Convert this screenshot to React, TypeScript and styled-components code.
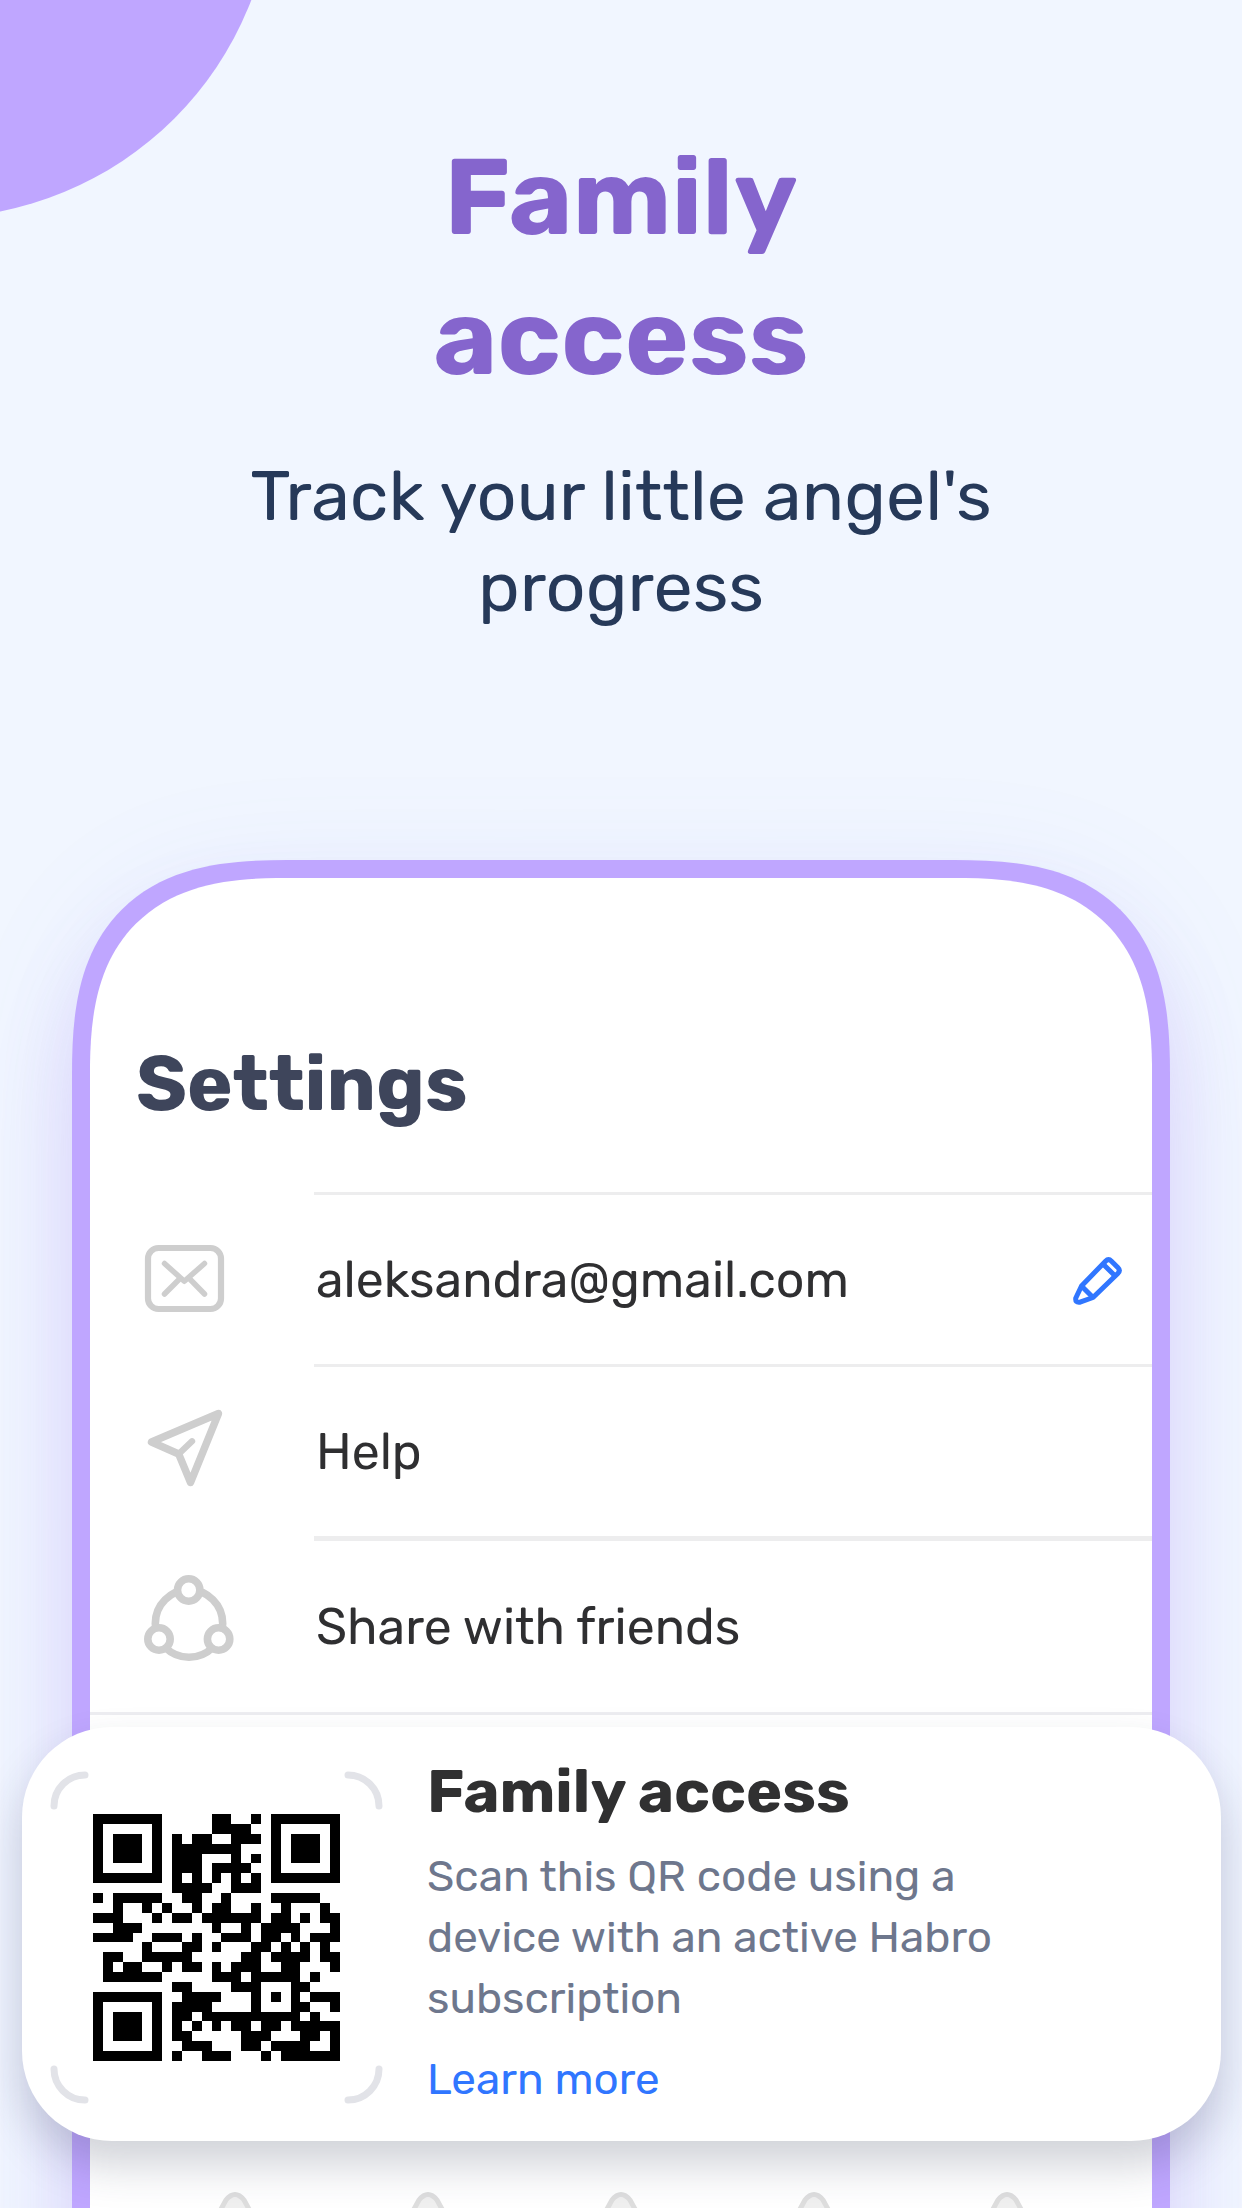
import React from "react";
import styled, { createGlobalStyle } from "styled-components";

const GlobalStyle = createGlobalStyle`
  *, *::before, *::after { box-sizing: border-box; }
  html, body { margin: 0; padding: 0; }
  h1, h2, h3, p, ul { margin: 0; padding: 0; }
  body {
    font-family: Rubik, Inter, "Liberation Sans", sans-serif;
    background: #f1f6ff;
  }
`;

const Page = styled.div`
  position: relative;
  display: flex;
  flex-direction: column;
  height: 100vh;
  overflow: hidden;
  background: #f1f6ff;
`;

const CornerDisc = styled.div`
  position: absolute;
  left: -406px;
  top: -462px;
  width: 680px;
  height: 680px;
  border-radius: 50%;
  background: #bfa6ff;
`;

const Intro = styled.header`
  position: relative;
  display: flex;
  flex-direction: column;
  align-items: center;
  gap: 44px;
  padding: 127px 40px 227px;
  text-align: center;
`;

const Headline = styled.h1`
  max-width: 500px;
  font-size: 108px;
  line-height: 140px;
  font-weight: 700;
  color: #8565cd;
`;

const Tagline = styled.p`
  max-width: 800px;
  font-size: 70px;
  line-height: 91px;
  color: #263959;
`;

const Stage = styled.main`
  position: relative;
  flex: 1;
  display: flex;
  flex-direction: column;
  min-height: 0;
  padding: 0 72px;
`;

const Phone = styled.section`
  flex: none;
  padding-top: 161px;
  border: 18px solid #bfa6ff;
  border-bottom: 0;
  border-radius: 176px 176px 0 0;
  background: #fff;
  box-shadow:
    0 60px 80px rgba(165, 110, 240, 0.22),
    0 20px 120px rgba(120, 130, 240, 0.1);

  @supports (corner-shape: superellipse(1.4)) {
    border-radius: 215px 215px 0 0;
    corner-shape: superellipse(1.4);
  }
`;

const ScreenTitle = styled.h2`
  padding-left: 46px;
  margin-bottom: 63px;
  font-size: 77px;
  line-height: 90px;
  font-weight: 700;
  color: #3e455b;
`;

const SettingsList = styled.ul`
  list-style: none;
  border-bottom: 3px solid #ededf1;
`;

const Row = styled.li`
  display: flex;
  align-items: center;
  padding-left: 40px;
`;

const RowIcon = styled.svg`
  flex: none;
  width: 120px;
  height: 120px;
  margin-right: 64px;
  fill: none;
  stroke: #cecece;
  stroke-linecap: round;
  stroke-linejoin: round;
`;

const RowBody = styled.div<{ $wide?: boolean }>`
  flex: 1;
  display: flex;
  align-items: center;
  justify-content: space-between;
  height: ${(p) => (p.$wide ? 176 : 172)}px;
  padding: 0 18px 0 2px;
  border-top: ${(p) => (p.$wide ? 5 : 3)}px solid #ededee;
  font-size: 50px;
  line-height: 64px;
  color: #2f2f31;
`;

const EditButton = styled.button`
  display: flex;
  padding: 0;
  border: 0;
  background: none;
  cursor: pointer;

  svg {
    width: 72px;
    height: 72px;
    fill: none;
    stroke: #3076ff;
    stroke-width: 5;
    stroke-linejoin: round;
  }
`;

const Rating = styled.div`
  display: flex;
  justify-content: center;
  gap: 53px;
  padding: 474px 0 40px;
`;

const StarButton = styled.button`
  display: flex;
  padding: 0;
  border: 0;
  background: none;

  svg {
    width: 140px;
    height: 140px;
    fill: #f0f0f0;
    stroke: #dedede;
    stroke-width: 5;
    stroke-linejoin: round;
  }
`;

const AccessCard = styled.aside`
  position: absolute;
  top: 867px;
  left: 22px;
  right: 21px;
  display: flex;
  gap: 44px;
  height: 414px;
  padding: 26px 28px 0;
  border-radius: 90px;
  background: #fff;
  box-shadow: 0 24px 44px rgba(40, 52, 78, 0.22);
`;

const Code = styled.svg`
  flex: none;
  width: 333px;
  height: 333px;
  margin-top: 18px;
`;

const CardText = styled.div`
  display: flex;
  flex-direction: column;
  align-items: flex-start;
`;

const CardTitle = styled.h3`
  font-size: 61px;
  line-height: 76px;
  font-weight: 700;
  color: #303031;
`;

const CardCopy = styled.p`
  max-width: 600px;
  margin: 17px 0 20px;
  font-size: 44px;
  line-height: 61px;
  color: #6e778d;
`;

const CardLink = styled.a`
  font-size: 44px;
  line-height: 61px;
  color: #3076ff;
  text-decoration: none;
`;

/* Dark modules of each row outside the finder squares, as [first, last] columns. */
const MODULES: number[][][] = [
  [[12, 13], [16, 16]],
  [[12, 15]],
  [[8, 8], [10, 11], [14, 16]],
  [[8, 14]],
  [[8, 10], [14, 14], [16, 16]],
  [[8, 10], [12, 15]],
  [[8, 8], [10, 10], [12, 12], [14, 14], [16, 16]],
  [[8, 11], [14, 16]],
  [[0, 0], [2, 6], [9, 10], [13, 13], [18, 22]],
  [[2, 2], [5, 5], [7, 7], [10, 10], [12, 13], [16, 16], [19, 19], [23, 23]],
  [[0, 2], [6, 6], [8, 9], [11, 16], [18, 19], [21, 21], [23, 24]],
  [[2, 4], [12, 12], [15, 15], [17, 20], [24, 24]],
  [[0, 3], [6, 8], [10, 10], [13, 15], [17, 18], [20, 20], [22, 24]],
  [[5, 5], [9, 10], [12, 12], [16, 17], [19, 19], [21, 21], [23, 23]],
  [[1, 2], [5, 9], [15, 16], [18, 21], [23, 24]],
  [[1, 1], [3, 4], [7, 7], [9, 10], [12, 12], [14, 16], [19, 20], [24, 24]],
  [[1, 6], [12, 14], [16, 20], [22, 22]],
  [[8, 9], [14, 16], [20, 21]],
  [[9, 12], [16, 16], [18, 18], [20, 20], [22, 24]],
  [[8, 11], [16, 16], [20, 21], [24, 24]],
  [[8, 9], [11, 20], [22, 22]],
  [[8, 8], [10, 10], [12, 12], [14, 15], [17, 18], [20, 24]],
  [[8, 9], [15, 17], [21, 22], [24, 24]],
  [[9, 11], [15, 16], [18, 21], [24, 24]],
  [[8, 8], [11, 13], [17, 17], [19, 24]],
];

const modulePath = MODULES.map((runs, y) =>
  runs.map(([a, b]) => `M${a} ${y}H${b + 1}V${y + 1}H${a}Z`).join("")
).join("");

const finderPath = [[0, 0], [18, 0], [0, 18]]
  .map(([x, y]) => `M${x} ${y}h7v7h-7zM${x + 1} ${y + 1}v5h5v-5zM${x + 2} ${y + 2}h3v3h-3z`)
  .join("");

function QrCode() {
  return (
    <Code viewBox="0 0 333 333" role="img" aria-label="QR code">
      <g fill="none" stroke="#e2e3e8" strokeWidth="7" strokeLinecap="round">
        <path d="M4 35A31 31 0 0 1 35 4" />
        <path d="M298 4A31 31 0 0 1 329 35" />
        <path d="M4 298A31 31 0 0 0 35 329" />
        <path d="M298 329A31 31 0 0 0 329 298" />
      </g>
      <svg x="43" y="43" width="247" height="247" viewBox="0 0 25 25" shapeRendering="crispEdges">
        <path d={modulePath + finderPath} />
      </svg>
    </Code>
  );
}

function MailIcon() {
  return (
    <RowIcon viewBox="0 -2 120 120" strokeWidth="5.5" aria-hidden="true">
      <rect x="18" y="28" width="73" height="61" rx="10.5" strokeWidth="6.2" />
      <path d="M34.5 43.5L54.3 61.3L74.5 43.5M34.5 74L50.5 58M74.5 74L58.8 58" />
    </RowIcon>
  );
}

function PlaneIcon() {
  return (
    <RowIcon viewBox="0 0 120 120" strokeWidth="7.4" aria-hidden="true">
      <path d="M21.5 52L88.5 23.5L60.5 92.5L48.7 64Z" />
      <path d="M48.7 64L62 51.3" strokeWidth="6.4" />
    </RowIcon>
  );
}

function CircleIcon() {
  return (
    <RowIcon viewBox="0 4 120 120" strokeWidth="7.6" aria-hidden="true">
      <circle cx="59" cy="63.5" r="33.7" />
      <g fill="#fff">
        <circle cx="58.7" cy="30" r="11.2" />
        <circle cx="29" cy="79" r="11.2" />
        <circle cx="88.6" cy="79" r="11.2" />
      </g>
    </RowIcon>
  );
}

function PencilIcon() {
  return (
    <svg viewBox="12 14 72 72" aria-hidden="true">
      <path d="M31.5 56L55.5 31.2Q58.5 28.2 61.5 31.2L67.8 37.5Q70.8 40.5 67.8 43.5L43 67.5L30 72.2Q25 73 25.8 68Z" />
      <path d="M31.5 56L43 67.5M53 34L65.2 46" />
    </svg>
  );
}

const STARS = [1, 2, 3, 4, 5];

export default function App() {
  return (
    <Page>
      <GlobalStyle />
      <CornerDisc />
      <Intro>
        <Headline>Family access</Headline>
        <Tagline>Track your little angel's progress</Tagline>
      </Intro>
      <Stage>
        <Phone>
          <ScreenTitle>Settings</ScreenTitle>
          <SettingsList>
            <Row>
              <MailIcon />
              <RowBody>
                aleksandra@gmail.com
                <EditButton type="button" aria-label="Edit email">
                  <PencilIcon />
                </EditButton>
              </RowBody>
            </Row>
            <Row>
              <PlaneIcon />
              <RowBody>Help</RowBody>
            </Row>
            <Row>
              <CircleIcon />
              <RowBody $wide>Share with friends</RowBody>
            </Row>
          </SettingsList>
          <Rating>
            {STARS.map((n) => (
              <StarButton key={n} type="button" aria-label={`Rate ${n}`}>
                <svg viewBox="0 0 140 140" aria-hidden="true">
                  <path d="M55 22L61 11Q70 0 79 11L85 22L96 44L130 49Q140 52 132 61L107 86L113 122Q113 132 103 128L70 111L37 128Q27 132 27 122L33 86L8 61Q0 52 10 49L44 44Z" />
                </svg>
              </StarButton>
            ))}
          </Rating>
        </Phone>
        <AccessCard>
          <QrCode />
          <CardText>
            <CardTitle>Family access</CardTitle>
            <CardCopy>Scan this QR code using a device with an active Habro subscription</CardCopy>
            <CardLink href="#learn-more">Learn more</CardLink>
          </CardText>
        </AccessCard>
      </Stage>
    </Page>
  );
}
